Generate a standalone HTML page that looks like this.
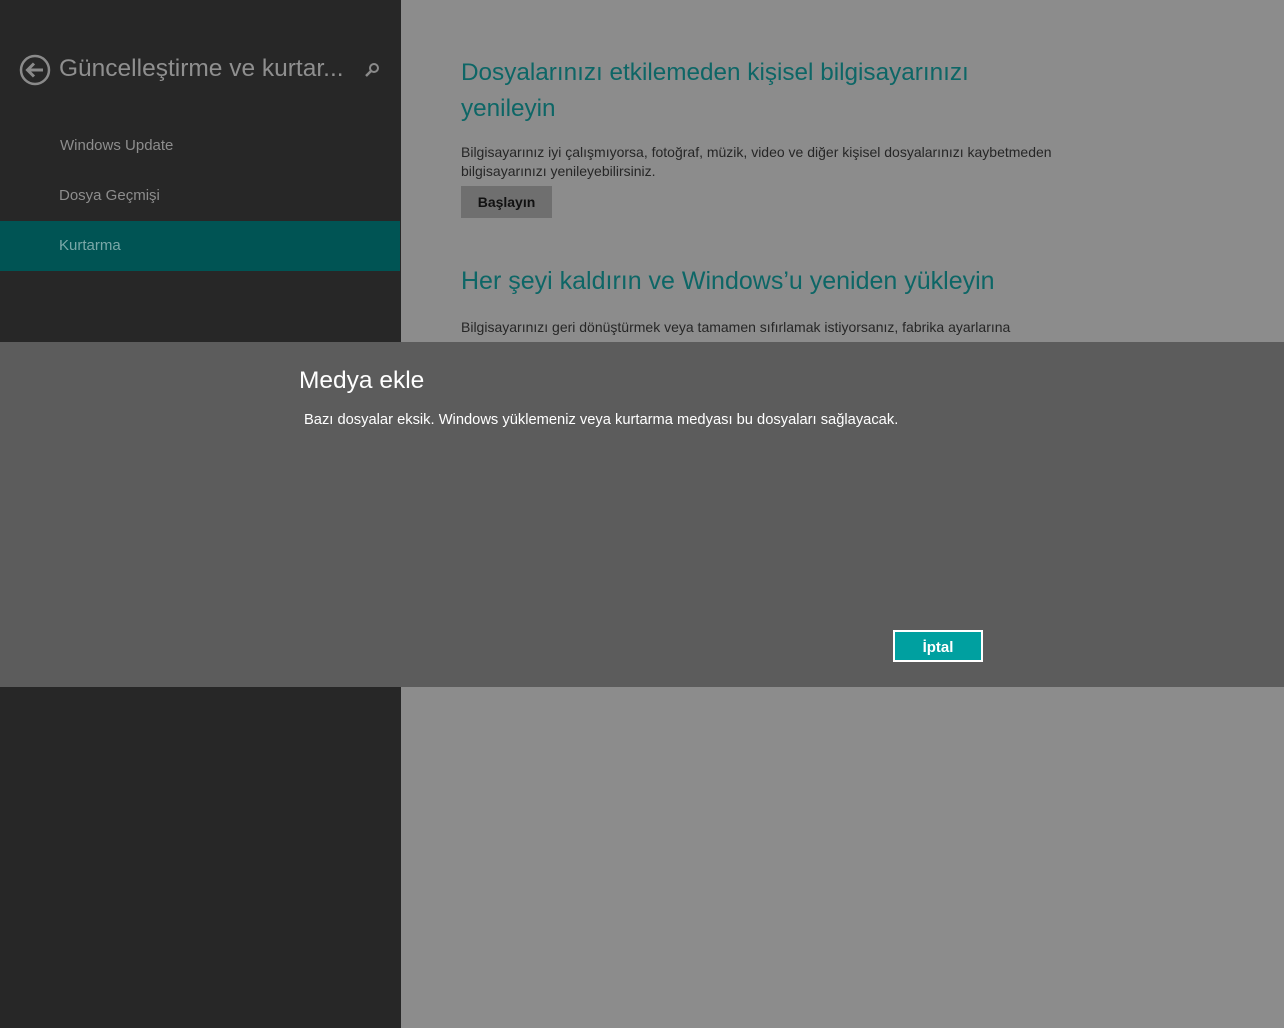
<!DOCTYPE html>
<html><head><meta charset="utf-8"><style>
body{margin:0;width:1284px;height:1028px;position:relative;overflow:hidden;font-family:"Liberation Sans",sans-serif;background:#8c8c8c}
.l{position:absolute;left:0;top:0;width:401px;height:1028px;background:#272727}
.t{position:absolute;white-space:nowrap}
</style></head><body>
<div class="l"></div>
<svg class="t" style="left:19px;top:54px" width="32" height="32" viewBox="0 0 32 32"><circle cx="16" cy="16" r="14" fill="none" stroke="#8a8a8a" stroke-width="2.5"/><path d="M24 16H9M15 9.5L8.5 16L15 22.5" fill="none" stroke="#8a8a8a" stroke-width="3"/></svg>
<div class="t" style="left:59px;top:55px;font-size:24.5px;color:#8f8f8f">Güncelleştirme ve kurtar...</div>
<svg class="t" style="left:364px;top:62px" width="16" height="16" viewBox="0 0 16 16"><circle cx="10" cy="6" r="4" fill="none" stroke="#8a8a8a" stroke-width="2"/><path d="M7 9L2 14" stroke="#8a8a8a" stroke-width="2.5"/></svg>
<div class="t" style="left:60px;top:137px;font-size:15px;color:#8d8d8d">Windows Update</div>
<div class="t" style="left:59px;top:187px;font-size:15px;color:#8d8d8d">Dosya Geçmişi</div>
<div class="t" style="left:0;top:221px;width:400px;height:50px;background:#005454"></div>
<div class="t" style="left:59px;top:237px;font-size:15px;color:#7aa8a8">Kurtarma</div>
<div class="t" style="left:461px;top:55px;font-size:24.3px;line-height:36px;color:#0d6666">Dosyalarınızı etkilemeden kişisel bilgisayarınızı<br>yenileyin</div>
<div class="t" style="left:461px;top:143px;font-size:14px;line-height:19px;color:#262626">Bilgisayarınız iyi çalışmıyorsa, fotoğraf, müzik, video ve diğer kişisel dosyalarınızı kaybetmeden<br>bilgisayarınızı yenileyebilirsiniz.</div>
<div class="t" style="left:461px;top:186px;width:91px;height:32px;background:#6f6f6f;color:#111;font-size:14px;font-weight:bold;text-align:center;line-height:33px">Başlayın</div>
<div class="t" style="left:461px;top:267px;font-size:25px;color:#0d6666">Her şeyi kaldırın ve Windows’u yeniden yükleyin</div>
<div class="t" style="left:461px;top:319px;font-size:14px;color:#262626">Bilgisayarınızı geri dönüştürmek veya tamamen sıfırlamak istiyorsanız, fabrika ayarlarına</div>
<div class="t" style="left:0;top:342px;width:1284px;height:345px;background:#5c5c5c"></div>
<div class="t" style="left:299px;top:367px;font-size:24.5px;color:#fff">Medya ekle</div>
<div class="t" style="left:304px;top:412px;font-size:14.7px;color:#fff">Bazı dosyalar eksik. Windows yüklemeniz veya kurtarma medyası bu dosyaları sağlayacak.</div>
<div class="t" style="left:893px;top:630px;width:86px;height:28px;border:2px solid #fff;background:#00a0a0;color:#fff;font-size:15px;font-weight:bold;text-align:center;line-height:31px">İptal</div>
</body></html>
